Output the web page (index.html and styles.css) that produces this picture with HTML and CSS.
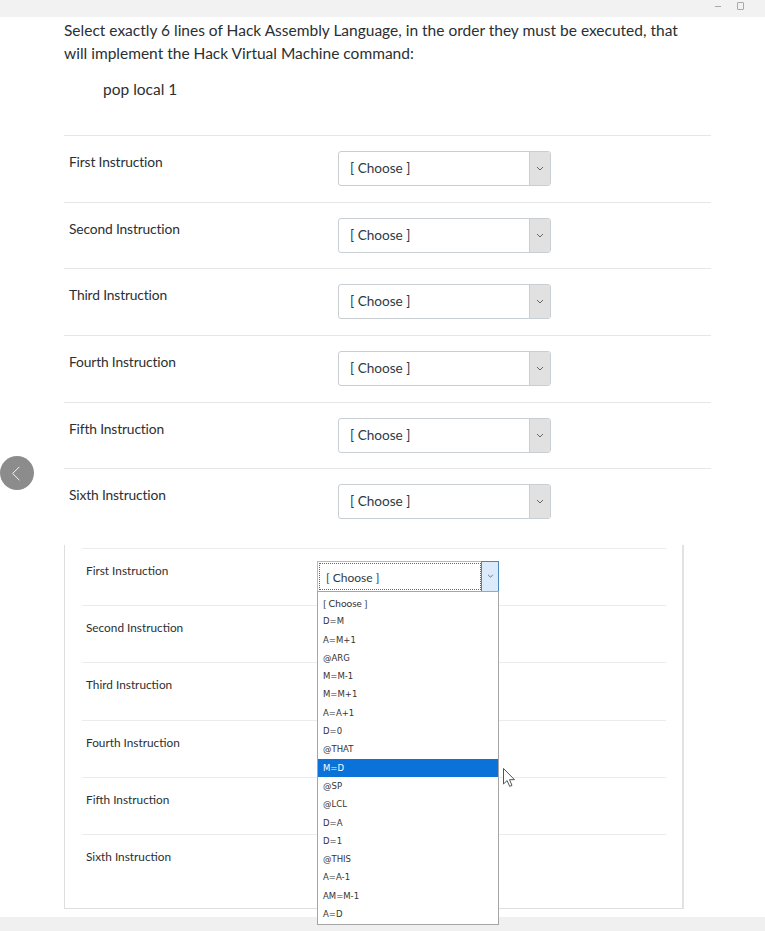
FILE: index.html
```html
<!DOCTYPE html>
<html lang="en">
<head>
<meta charset="utf-8">
<title>Hack quiz</title>
<link rel="stylesheet" href="styles.css">
</head>
<body>
<div class="topbar">
  <span class="ctl-min"></span>
  <span class="ctl-max"></span>
</div>
<main class="content">
  <p class="prompt">Select exactly 6 lines of Hack Assembly Language, in the order they must be executed, that<br>will implement the Hack Virtual Machine command:</p>
  <p class="command">pop local 1</p>
  <div class="rows">
    <div class="row"><div class="label">First Instruction</div><div class="select"><span class="val">[ Choose ]</span><span class="arrow"><svg viewBox="0 0 8 5" width="8" height="5"><path d="M1 1l3 3 3-3" fill="none" stroke="#666" stroke-width="1"/></svg></span></div></div>
    <div class="row"><div class="label">Second Instruction</div><div class="select"><span class="val">[ Choose ]</span><span class="arrow"><svg viewBox="0 0 8 5" width="8" height="5"><path d="M1 1l3 3 3-3" fill="none" stroke="#666" stroke-width="1"/></svg></span></div></div>
    <div class="row"><div class="label">Third Instruction</div><div class="select"><span class="val">[ Choose ]</span><span class="arrow"><svg viewBox="0 0 8 5" width="8" height="5"><path d="M1 1l3 3 3-3" fill="none" stroke="#666" stroke-width="1"/></svg></span></div></div>
    <div class="row"><div class="label">Fourth Instruction</div><div class="select"><span class="val">[ Choose ]</span><span class="arrow"><svg viewBox="0 0 8 5" width="8" height="5"><path d="M1 1l3 3 3-3" fill="none" stroke="#666" stroke-width="1"/></svg></span></div></div>
    <div class="row"><div class="label">Fifth Instruction</div><div class="select"><span class="val">[ Choose ]</span><span class="arrow"><svg viewBox="0 0 8 5" width="8" height="5"><path d="M1 1l3 3 3-3" fill="none" stroke="#666" stroke-width="1"/></svg></span></div></div>
    <div class="row"><div class="label">Sixth Instruction</div><div class="select"><span class="val">[ Choose ]</span><span class="arrow"><svg viewBox="0 0 8 5" width="8" height="5"><path d="M1 1l3 3 3-3" fill="none" stroke="#666" stroke-width="1"/></svg></span></div></div>
  </div>
</main>

<div class="back-btn"><svg viewBox="0 0 12 20" width="10" height="17"><path d="M10 2L2 10l8 8" fill="none" stroke="#fff" stroke-width="1.1"/></svg></div>

<section class="panel">
  <div class="prow">
    <div class="plabel">First Instruction</div>
    <div class="pselect open">
      <span class="pval">[ Choose ]</span>
      <span class="parrow"><svg viewBox="0 0 8 5" width="7" height="4"><path d="M1 1l3 3 3-3" fill="none" stroke="#555" stroke-width="1"/></svg></span>
      <ul class="listbox">
        <li class="opt first">[ Choose ]</li>
        <li class="opt">D=M</li>
        <li class="opt">A=M+1</li>
        <li class="opt">@ARG</li>
        <li class="opt">M=M-1</li>
        <li class="opt">M=M+1</li>
        <li class="opt">A=A+1</li>
        <li class="opt">D=0</li>
        <li class="opt">@THAT</li>
        <li class="opt selected">M=D</li>
        <li class="opt">@SP</li>
        <li class="opt">@LCL</li>
        <li class="opt">D=A</li>
        <li class="opt">D=1</li>
        <li class="opt">@THIS</li>
        <li class="opt">A=A-1</li>
        <li class="opt">AM=M-1</li>
        <li class="opt">A=D</li>
      </ul>
    </div>
  </div>
  <div class="prow"><div class="plabel">Second Instruction</div></div>
  <div class="prow"><div class="plabel">Third Instruction</div></div>
  <div class="prow"><div class="plabel">Fourth Instruction</div></div>
  <div class="prow"><div class="plabel">Fifth Instruction</div></div>
  <div class="prow"><div class="plabel">Sixth Instruction</div></div>
</section>

<div class="bottombar"></div>

<svg class="cursor" viewBox="0 0 12 19" width="12" height="19"><path d="M0.5 0.5v15.5l3.6-3.4 2.6 5.8 2.3-1-2.5-5.7h5z" fill="#fff" stroke="#555" stroke-width="1"/></svg>
</body>
</html>
```

FILE: styles.css
```css
* { box-sizing: border-box; }
html, body { margin: 0; padding: 0; }
body {
  width: 765px;
  height: 931px;
  overflow: hidden;
  background: #fff;
  font-family: Lato, "Open Sans", sans-serif;
  color: #2d3b45;
  position: relative;
}
.topbar {
  height: 17px;
  background: #f2f2f2;
  display: flex;
  justify-content: flex-end;
  align-items: flex-start;
  padding-right: 21px;
  gap: 16px;
}
.ctl-min {
  width: 6px;
  height: 1px;
  background: #a8a8a8;
  margin-top: 6px;
}
.ctl-max {
  width: 7px;
  height: 8px;
  border: 1px solid #a8a8a8;
  border-radius: 1px;
  margin-top: 2px;
}
.content {
  margin-left: 64px;
  width: 647px;
}
.prompt {
  margin: 2px 0 0;
  font-size: 15.5px;
  line-height: 23px;
  color: #2b2f33;
  white-space: nowrap;
}
.command {
  margin: 12.5px 0 0 39px;
  font-size: 15.5px;
  line-height: 23px;
  color: #2b2f33;
}
.rows { margin-top: 34.5px; }
.row {
  height: 66.67px;
  border-top: 1px solid #e6e6e6;
  display: flex;
  align-items: flex-start;
}
.label {
  width: 274px;
  padding-left: 5px;
  margin-top: 17px;
  font-size: 13.8px;
  line-height: 18px;
  letter-spacing: -0.15px;
  color: #2b2f33;
}
.select {
  margin-top: 15px;
  width: 213px;
  height: 35px;
  border: 1px solid #c9ced2;
  border-radius: 3px;
  display: flex;
  background: #fff;
  overflow: hidden;
}
.val {
  flex: 1;
  padding-left: 11px;
  font-size: 13.6px;
  line-height: 33px;
  color: #2d3b45;
}
.arrow {
  width: 21px;
  background: #e1e1e1;
  border-left: 1px solid #c9ced2;
  display: flex;
  align-items: center;
  justify-content: center;
}
.back-btn {
  position: absolute;
  left: 0;
  top: 456px;
  width: 34px;
  height: 34px;
  border-radius: 50%;
  background: #8c8c8c;
  display: flex;
  align-items: center;
  justify-content: center;
  padding-right: 2px;
}
.panel {
  margin: 10px 0 0 64px;
  width: 620px;
  border-left: 1px solid #dedede;
  border-right: 2px solid #e2e2e2;
  border-bottom: 1px solid #dedede;
  padding: 3px 16px 17px 17px;
}
.prow {
  height: 57.2px;
  border-top: 1px solid #ececec;
  display: flex;
  align-items: flex-start;
}
.plabel {
  width: 235px;
  padding-left: 4px;
  margin-top: 14px;
  font-size: 11.8px;
  line-height: 16px;
  color: #2b2f33;
}
.pselect {
  position: relative;
  margin-top: 12px;
  width: 182px;
  height: 31px;
  border: 1px solid #b8b8b8;
  display: flex;
  background: #fff;
}
.pval {
  flex: 1;
  border: 1px dotted #666;
  margin: 1px 0 1px 1px;
  padding-left: 6px;
  font-size: 12px;
  line-height: 26px;
  padding-top: 1px;
}
.parrow {
  width: 18px;
  margin: -1px -1px -1px 0;
  background: #dcebfb;
  border: 1px solid #4a86b8;
  display: flex;
  align-items: center;
  justify-content: center;
}
.listbox {
  position: absolute;
  left: -1px;
  top: 29px;
  width: 182px;
  margin: 0;
  padding: 2px 0 1px;
  list-style: none;
  background: #fff;
  border: 1px solid #a6a6a6;
  z-index: 5;
}
.opt {
  height: 18.3px;
  line-height: 18.3px;
  padding-left: 5px;
  font-family: "DejaVu Sans", Verdana, sans-serif;
  font-size: 8.5px;
  color: #333;
}
.opt.first {
  font-family: Lato, sans-serif;
  font-size: 10px;
}
.opt.selected {
  background: #0a72d8;
  color: #fff;
}
.bottombar {
  margin-top: 8px;
  height: 14px;
  background: #f0f0f0;
}
.cursor {
  position: absolute;
  left: 503px;
  top: 768px;
  z-index: 10;
}
```
